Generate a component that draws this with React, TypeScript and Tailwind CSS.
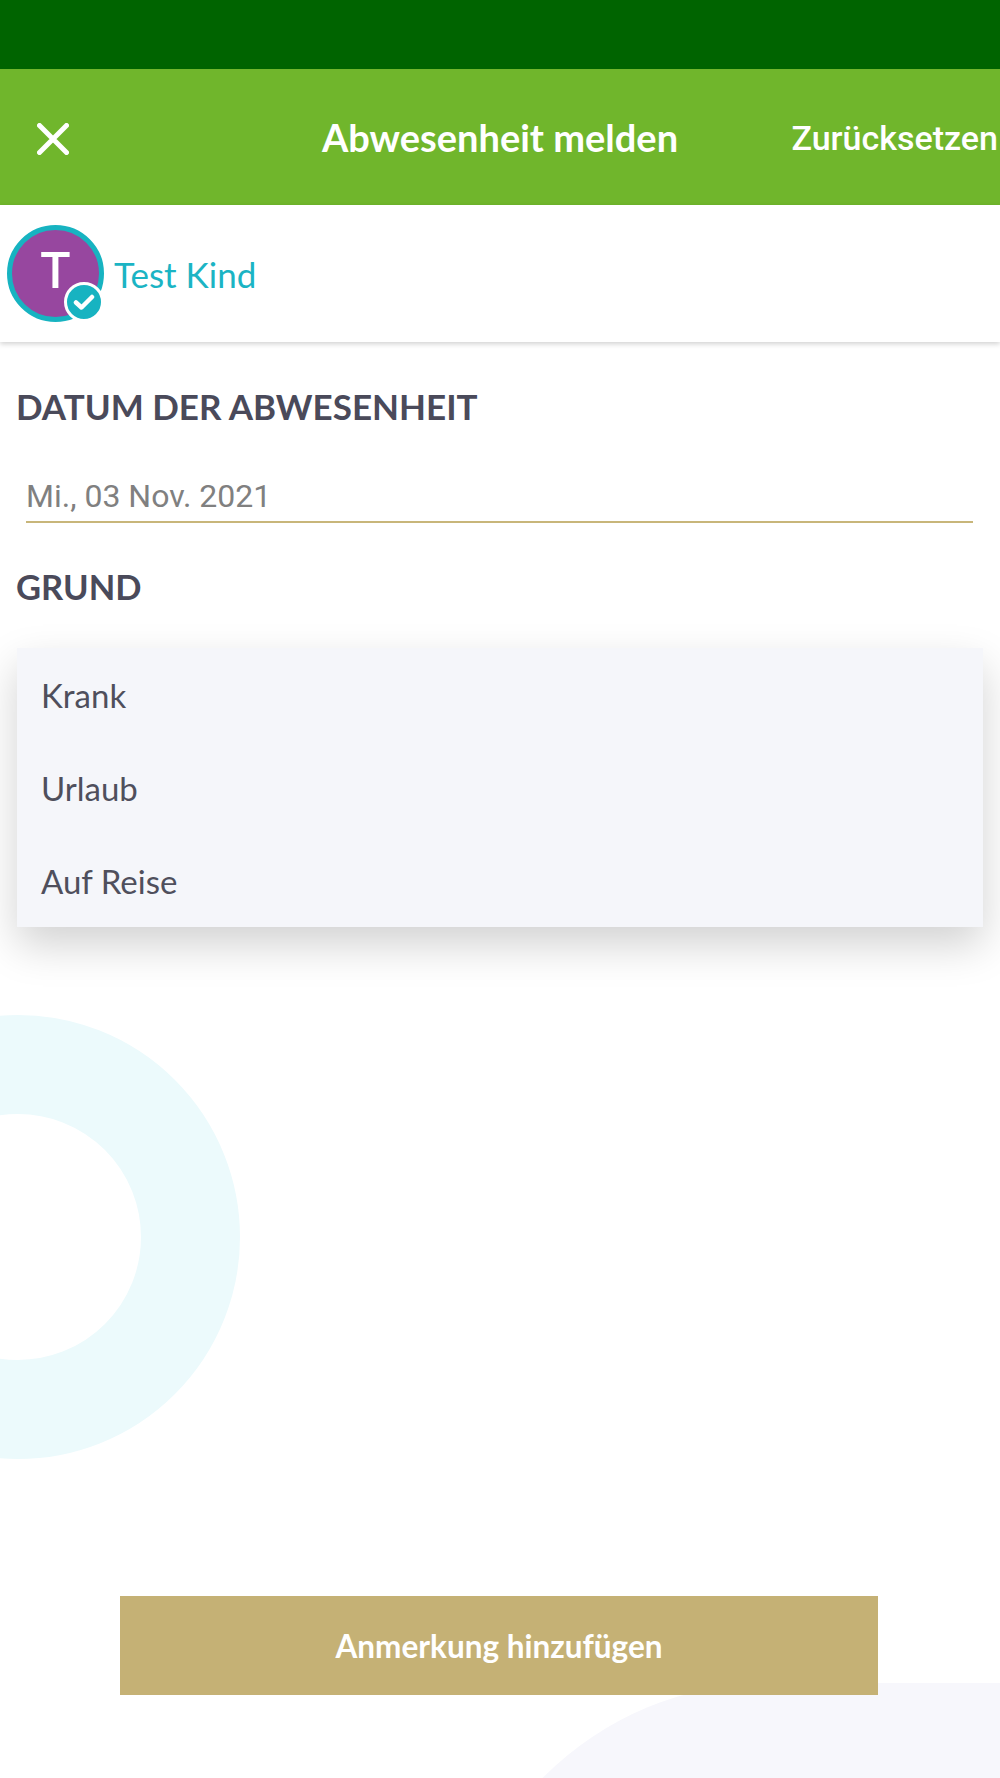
const nunito = "font-['Lato','Open_Sans',sans-serif]";

const reasons = ["Krank", "Urlaub", "Auf Reise"];

const Avatar = () => (
    <div className="relative w-[97px] h-[97px] rounded-full bg-[#97479f] border-[5px] border-[#17b3c1] flex items-center justify-center shrink-0">
        <span className={`${nunito} text-white font-semibold text-[50px] leading-none -mt-[9px]`}>T</span>
        <div className="absolute right-[-5px] bottom-[-5px] w-[40px] h-[40px] rounded-full bg-[#17b3c1] border-[3px] border-white flex items-center justify-center">
            <svg width="22" height="18" viewBox="0 0 22 18" fill="none">
                <path d="M3 9.5L8.5 14.5L19 4" stroke="white" strokeWidth="4.5" strokeLinecap="round" strokeLinejoin="round" />
            </svg>
        </div>
    </div>
);

export default function App() {
    return (
        <div className="relative w-[1000px] h-[1778px] overflow-hidden bg-white flex flex-col">
            {/* decorative background shapes */}
            <div className="absolute left-[-204px] top-[1015px] w-[444px] h-[444px] rounded-full border-[99px] border-[#ecfafc]" />
            <div className="absolute left-[450px] top-[1683px] w-[550px] h-[400px] rounded-tl-[320px] bg-[#f7f7fc]" />

            <div className="relative h-[69px] bg-[#006400] shrink-0" />

            <header className="relative h-[136px] bg-[#70b62c] shrink-0 grid grid-cols-[1fr_auto_1fr] items-center">
                <div className="pl-[37px] pt-[4px]">
                    <svg width="32" height="32" viewBox="0 0 32 32" fill="none">
                        <path d="M2.5 2.5L29.5 29.5M29.5 2.5L2.5 29.5" stroke="white" strokeWidth="5" strokeLinecap="round" />
                    </svg>
                </div>
                <h1 className={`${nunito} text-white font-bold text-[38px] leading-none`}>Abwesenheit melden</h1>
                <div className="flex justify-end pr-[2px]">
                    <button className="font-['Roboto',sans-serif] font-medium text-white text-[34px] leading-none mt-[2px]">Zurücksetzen</button>
                </div>
            </header>

            <div className="relative h-[137px] bg-white shrink-0 flex items-center pl-[7px] gap-[10px] shadow-[0_2px_5px_rgba(0,0,0,0.18)]">
                <Avatar />
                <span className={`${nunito} text-[#1bb4c4] text-[35px] leading-none mt-[2px]`}>Test Kind</span>
            </div>

            <main className="relative flex-1 flex flex-col">
                <h2 className={`${nunito} text-[#4a4a5a] font-bold text-[35px] leading-[40px] pl-[16px] mt-[44px]`}>DATUM DER ABWESENHEIT</h2>
                <div className="mx-[26px] mt-[47px] h-[50px] border-b-2 border-[#c8b67a] w-[947px] font-['Roboto',sans-serif] text-[#808080] text-[32px] leading-[46px]">
                    Mi., 03 Nov. 2021
                </div>
                <h2 className={`${nunito} text-[#4a4a5a] font-bold text-[34.5px] leading-[40px] pl-[16px] mt-[44px]`}>GRUND</h2>
                <ul className="mx-[17px] mt-[41px] h-[279px] bg-[#f5f6fa] flex flex-col shadow-[0_18px_40px_rgba(0,0,0,0.18)]">
                    {reasons.map((reason) => (
                        <li key={reason} className={`${nunito} h-[93px] flex items-center pl-[24px] pt-[2px] text-[#4f4f5c] text-[33px]`}>{reason}</li>
                    ))}
                </ul>
                <button className={`${nunito} relative left-[-1px] mt-auto mb-[83px] mx-auto w-[758px] h-[99px] bg-[#c5b175] text-white font-bold text-[31.5px] pt-[2px]`}>
                    Anmerkung hinzufügen
                </button>
            </main>
        </div>
    );
}
